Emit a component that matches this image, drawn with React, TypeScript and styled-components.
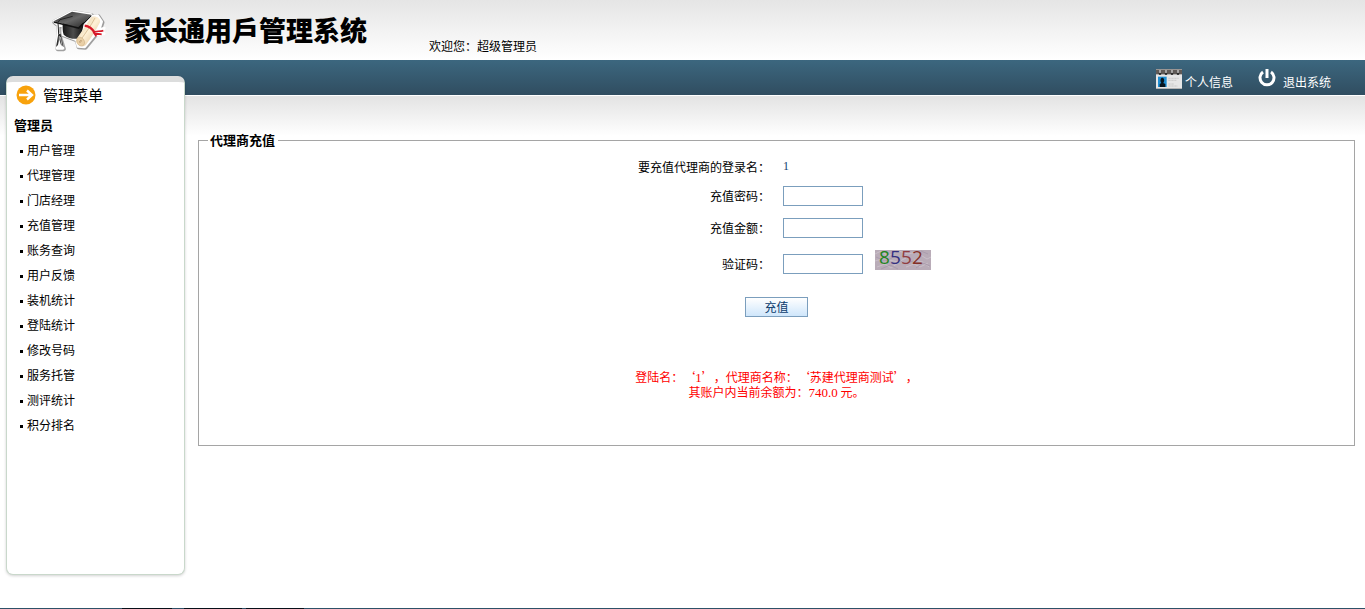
import React from 'react';
import styled, { createGlobalStyle } from 'styled-components';

const GlobalStyle = createGlobalStyle`
  *, *::before, *::after { box-sizing: border-box; }
  body {
    margin: 0;
    background: #fff;
    color: #000;
    font: 12px/15px "Noto Sans CJK SC", "Noto Sans", sans-serif;
    text-spacing-trim: space-all;
  }
`;

const Page = styled.div`
  display: flex;
  flex-direction: column;
  min-height: 100vh;
`;

const Header = styled.header`
  display: flex;
  align-items: flex-start;
  height: 60px;
  padding-left: 50px;
  background: linear-gradient(#e5e5e5, #fff);
`;

const Logo = styled.svg`
  flex: none;
  width: 57px;
  height: 44px;
  margin-top: 8px;
`;

const Title = styled.h1`
  flex: none;
  width: 305px;
  margin: 0 0 0 17px;
  font-size: 27px;
  line-height: 60px;
  font-weight: 900;
  white-space: nowrap;
`;

const Welcome = styled.p`
  margin: 38px 0 0;
  white-space: nowrap;
`;

const Toolbar = styled.nav`
  display: flex;
  justify-content: flex-end;
  gap: 25px;
  height: 35px;
  padding: 8px 34px 0 0;
  background: linear-gradient(#3c677f, #304d60);
`;

const ToolLink = styled.a<{ $gap: number }>`
  display: flex;
  gap: ${({ $gap }) => $gap}px;
  color: #fff;
  line-height: 28px;
  text-decoration: none;
`;

const Body = styled.div`
  display: flex;
  flex: 1;
  align-items: flex-start;
  border-top: 1px solid #fff;
  background: linear-gradient(#e3e3e3, #fff) 0 0 / 100% 40px no-repeat;
`;

const Sidebar = styled.aside`
  flex: none;
  width: 179px;
  min-height: 499px;
  margin: -20px 13px 33px 6px;
  padding-bottom: 20px;
  border: 1px solid #c9d8cb;
  border-top: 6px solid #dcdddd;
  border-radius: 7px;
  background: #fff;
  box-shadow: 0 1px 3px rgba(0, 0, 0, 0.18);
`;

const MenuHeading = styled.h2`
  display: flex;
  align-items: center;
  gap: 7px;
  margin: 0;
  padding: 3px 0 0 9px;
  font-size: 15px;
  line-height: 20px;
  font-weight: 400;
`;

const MenuGroup = styled.h3`
  margin: 7px 0 0 7px;
  font-size: 13px;
  line-height: 25px;
  font-weight: 700;
`;

const MenuList = styled.ul`
  margin: 0;
  padding: 0;
  list-style: none;
`;

const MenuItem = styled.li`
  display: flex;
  align-items: center;
  gap: 4px;
  height: 25px;
  padding-left: 13px;

  &::before {
    content: '';
    width: 3px;
    height: 3px;
    margin-top: 4px;
    background: #000;
  }
`;

const MenuLink = styled.a`
  color: #000;
  text-decoration: none;
`;

const Content = styled.main`
  flex: 1;
  min-width: 0;
  padding: 36px 10px 0 0;
`;

const Panel = styled.fieldset`
  min-width: 0;
  margin: 0;
  padding: 5px 0 46px;
  border: 1px solid #a5a5a5;
`;

const Legend = styled.legend`
  margin-left: 9px;
  padding: 0 3px 0 2px;
  font-size: 13px;
  line-height: 16px;
  font-weight: 700;
`;

const Row = styled.div<{ $height: number }>`
  display: grid;
  grid-template-columns: 1fr 1fr;
  column-gap: 13px;
  align-items: center;
  height: ${({ $height }) => $height}px;
`;

const Label = styled.label`
  text-align: right;
`;

const Field = styled.div`
  display: flex;
  gap: 12px;
  padding-top: 2px;
`;

const LoginName = styled.output`
  color: #12426e;
  font: 12px/15px "Liberation Serif", serif;
`;

const TextInput = styled.input`
  width: 80px;
  height: 20px;
  padding: 1px 3px;
  border: 1px solid #7b9ebd;
  border-radius: 0;
  background: #fff;
  font: inherit;
  outline: none;
`;

const Captcha = styled.svg`
  width: 56px;
  height: 20px;
  margin-top: -4px;
  overflow: visible;
`;

const Actions = styled.div`
  display: flex;
  justify-content: center;
  padding-top: 14px;
`;

const SubmitButton = styled.button`
  width: 63px;
  height: 20px;
  padding: 0;
  border: 1px solid #7b9ebd;
  background: linear-gradient(#fff, #cfe6fb);
  color: #0c3d6e;
  font: inherit;
  line-height: 18px;
`;

const Notice = styled.p`
  margin: 52px 0 0;
  color: #f00;
  text-align: center;
`;

const Amount = styled.span`
  font-family: "Liberation Serif", serif;
  font-size: 13px;
  line-height: 1;
`;

const Footer = styled.footer`
  height: 1px;
  background: linear-gradient(90deg, #2e5168 122px, #071019 122px 172px, #2e5168 172px 184px, #071019 184px 242px, #2e5168 242px 246px, #071019 246px 304px, #2e5168 304px);
`;

const GraduationLogo = () => (
  <Logo viewBox="30 24 171 132" aria-hidden="true">
    <defs>
      <linearGradient id="board" x1="0" y1="0" x2="1" y2="1">
        <stop offset="0" stopColor="#222" />
        <stop offset="0.5" stopColor="#686868" />
        <stop offset="1" stopColor="#202020" />
      </linearGradient>
      <linearGradient id="cap" x1="0" x2="1">
        <stop offset="0" stopColor="#151515" />
        <stop offset="0.5" stopColor="#4c4c4c" />
        <stop offset="1" stopColor="#111" />
      </linearGradient>
      <linearGradient id="paper" x1="0" y1="0" x2="1" y2="1">
        <stop offset="0" stopColor="#d9c096" />
        <stop offset="0.5" stopColor="#fff1d6" />
        <stop offset="1" stopColor="#d3b181" />
      </linearGradient>
    </defs>
    <g stroke="#666" strokeWidth="13" strokeLinejoin="round" opacity="0.6" transform="translate(2 2)">
      <path d="M41 64 96 35l57 9-30 63-14 12-40-15V79L54 75v22l15 48H51l3-70z" />
      <path d="M153 50l20-3 12 18-7 22-44 54-20-2-5-22z" />
    </g>
    <g stroke="#fff" strokeWidth="8" strokeLinejoin="round" fill="#fff">
      <path d="M41 64 96 35l57 9-30 63-14 12-40-15V79L54 75v22l15 48H51l3-70z" />
      <path d="M153 50l20-3 12 18-7 22-44 54-20-2-5-22z" />
      <path d="M168 92l25-8-7 10 7 7-24 4z" />
    </g>
    <path d="M68 70c0 13-1 24 3 34 13 11 29 14 42 12 9-9 16-23 18-49z" fill="url(#cap)" />
    <path d="M41 64 96 35l58 9-39 38z" fill="url(#board)" />
    <path d="M41 64l74 18 39-38v5l-37 38-76-19z" fill="#111" />
    <path d="M98 49 60 59l-6 8 2 35" fill="none" stroke="#222" strokeWidth="3" />
    <path d="M55 102l-7 39 6-6 4-16 5 16 8 6-9-39z" fill="#303030" />
    <path d="M58 108l-1 38M61 111l6 30" stroke="#eee" strokeWidth="2" />
    <path d="M109 118c14-20 30-44 43-64 8-9 31-3 28 13-12 24-28 49-42 67-12 13-35-2-29-16z" fill="url(#paper)" />
    <path d="M165 54c-12 22-28 45-41 63" fill="none" stroke="#c9aa7b" strokeWidth="2" />
    <ellipse cx="122" cy="125" rx="11" ry="14" fill="#e9cfa6" stroke="#b8976a" strokeWidth="1" transform="rotate(-30 122 125)" />
    <path d="M126 124c-5-5-9 1-5 5" fill="none" stroke="#9d7c52" strokeWidth="2" />
    <path d="M134 77c15 2 24 11 30 21" fill="none" stroke="#d71928" strokeWidth="7" />
    <path d="M160 98c7-7 17-2 30-6M160 99l25 4M160 97l9 12" fill="none" stroke="#d71928" strokeWidth="5" />
  </Logo>
);

const CardIcon = () => (
  <svg width="26" height="22" viewBox="0 0 78 66" aria-hidden="true">
    <path d="M0 6h78v57H0z" fill="#e6e6e6" />
    <path d="M0 3h78v16H0z" fill="#5f5a57" />
    <path d="M0 3h78v3H0z" fill="#9a9593" />
    <path d="M0 60h78v3H0z" fill="#b4b4b4" />
    <path d="M6 26h26v31H6z" fill="#1f8ed2" />
    <path d="M11 57v-9l5-3c-5-8-2-16 3-16s8 8 3 16l6 3v9z" fill="#07151f" />
    <path d="M37 31h31M37 37h24M37 48h18M37 54h28" stroke="#b9b9b9" strokeWidth="2" strokeDasharray="7 2" />
    {[12, 30, 48, 66].map((x) => (
      <g key={x}>
        <circle cx={x} cy="17" r="4" fill="#2b2b2b" />
        <path d={`M${x} 6v9`} stroke="#ccc" strokeWidth="4" />
      </g>
    ))}
  </svg>
);

const PowerIcon = () => (
  <svg width="18" height="20" viewBox="0 0 18 20" fill="none" stroke="#fff" aria-hidden="true">
    <path d="M5 4a7 7 0 1 0 8 0" strokeWidth="3" />
    <path d="M9 1v9" strokeWidth="3" />
  </svg>
);

const ArrowIcon = () => (
  <svg width="20" height="20" viewBox="0 0 20 20" aria-hidden="true">
    <circle cx="10" cy="10" r="9.5" fill="#f8a20c" />
    <path d="M3 10h12M11 5.500l5 4.500-5 4.500" fill="none" stroke="#fff" strokeWidth="2.400" />
  </svg>
);

const captchaDigits = [
  { digit: '8', x: 4, color: '#23851e' },
  { digit: '5', x: 15, color: '#343080' },
  { digit: '5', x: 26, color: '#913d40' },
  { digit: '2', x: 37, color: '#843027' },
];

const CaptchaImage = () => (
  <Captcha viewBox="0 0 56 20" role="img" aria-label="验证码 8552">
    <rect width="56" height="20" fill="#b9acb8" />
    <path
      d="M0 4l6-3 7 5 8-4M2 17l8-3 6 4 7-5M14 10l9 2 8-4M31 17l8-3 6 3 8-4M44 4l8 5 4-2M0 11l7-2 4 3M24 1l9 3 9-2M39 10l9 2 6 5"
      fill="none"
      stroke="#c9bfc8"
    />
    <path d="M1 7l9 4 7-3M6 19l9-4 8 4M23 9l7 5 8-3M41 18l7-5 7 3M46 1l7 3" fill="none" stroke="#ab9cad" />
    <g fontFamily="Open Sans, sans-serif" fontSize="19">
      {captchaDigits.map(({ digit, x, color }) => (
        <text key={x} x={x} y="14" fill={color}>{digit}</text>
      ))}
    </g>
  </Captcha>
);

const menuItems = [
  '用户管理', '代理管理', '门店经理', '充值管理', '账务查询', '用户反馈',
  '装机统计', '登陆统计', '修改号码', '服务托管', '测评统计', '积分排名',
];

export default function App() {
  return (
    <Page lang="zh-CN">
      <GlobalStyle />
      <Header>
        <GraduationLogo />
        <Title>家长通用戶管理系统</Title>
        <Welcome>欢迎您：超级管理员</Welcome>
      </Header>
      <Toolbar>
        <ToolLink href="#profile" $gap={3}><CardIcon />个人信息</ToolLink>
        <ToolLink href="#logout" $gap={7}><PowerIcon />退出系统</ToolLink>
      </Toolbar>
      <Body>
        <Sidebar>
          <MenuHeading><ArrowIcon />管理菜单</MenuHeading>
          <MenuGroup>管理员</MenuGroup>
          <MenuList>
            {menuItems.map((item) => (
              <MenuItem key={item}><MenuLink href="#menu">{item}</MenuLink></MenuItem>
            ))}
          </MenuList>
        </Sidebar>
        <Content>
          <form onSubmit={(event) => event.preventDefault()}>
            <Panel>
              <Legend>代理商充值</Legend>
              <Row $height={26}>
                <Label htmlFor="login">要充值代理商的登录名：</Label>
                <LoginName id="login">1</LoginName>
              </Row>
              <Row $height={32}>
                <Label htmlFor="password">充值密码：</Label>
                <Field><TextInput id="password" type="password" /></Field>
              </Row>
              <Row $height={32}>
                <Label htmlFor="amount">充值金额：</Label>
                <Field><TextInput id="amount" type="text" /></Field>
              </Row>
              <Row $height={40}>
                <Label htmlFor="code">验证码：</Label>
                <Field><TextInput id="code" type="text" /><CaptchaImage /></Field>
              </Row>
              <Actions><SubmitButton type="submit">充值</SubmitButton></Actions>
              <Notice>
                登陆名：‘<Amount>1</Amount>’，代理商名称：‘苏建代理商测试’，<br />
                其账户内当前余额为：<Amount>740.0</Amount> 元。
              </Notice>
            </Panel>
          </form>
        </Content>
      </Body>
      <Footer />
    </Page>
  );
}
